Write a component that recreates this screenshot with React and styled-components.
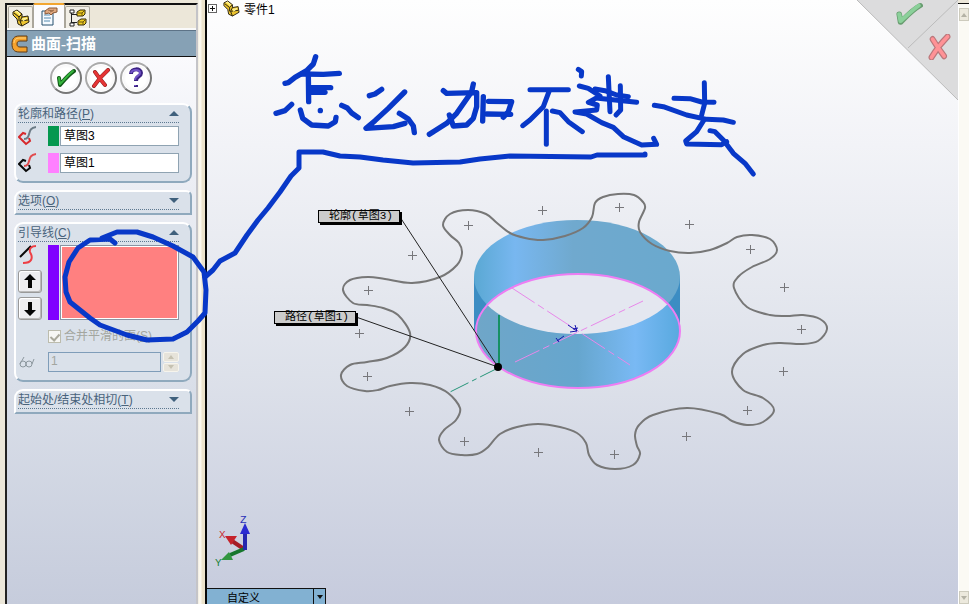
import React from "react";
import styled, { createGlobalStyle } from "styled-components";

const GlobalStyle = createGlobalStyle`
  * { box-sizing: border-box; }
  body { margin: 0; overflow: hidden; }
  body, button, input, textarea {
    font-family: "Liberation Sans", "Noto Sans CJK SC", sans-serif;
    font-size: 12px;
  }
  svg { display: block; }
`;

const Page = styled.div`
  position: relative;
  display: flex;
  min-height: 100vh;
  overflow: hidden;
  background: #ece7d9;
`;

const Dock = styled.aside`
  display: flex;
  width: 207px;
  flex: none;
  padding: 3px 0 0 5px;
  border-right: 2px solid #080808;
  background: linear-gradient(90deg, #ece7d9 0 198px, #fbf8ef 199px 201px, #ece3cc 202px);
`;

const Panel = styled.div`
  display: flex;
  flex-direction: column;
  width: 193px;
  border-top: 2px solid #111;
  border-left: 2px solid #222;
  border-right: 2px solid #c4c4c8;
  background: #ece7d9;
`;

const Tabs = styled.nav`
  display: flex;
  height: 25px;
  padding-left: 1px;
  align-items: flex-end;
  border-bottom: 2px solid #fafafa;
`;

const Tab = styled.button`
  display: grid;
  place-items: center;
  width: ${(p) => (p.$active ? 32 : 25)}px;
  height: ${(p) => (p.$active ? 25 : 22)}px;
  padding: 0;
  border: 1px solid #aaa69b;
  border-top: ${(p) => (p.$active ? "2px solid #f2a630" : "1px solid #aaa69b")};
  border-bottom: 0;
  border-radius: 2px 2px 0 0;
  background: ${(p) => (p.$active ? "#fbfbfd" : "#f2efe7")};
`;

const TitleBar = styled.h1`
  display: flex;
  align-items: center;
  gap: 3px;
  height: 27px;
  margin: 0;
  padding-left: 4px;
  border-top: 1px solid #5d7387;
  border-bottom: 1px solid #111;
  background: #86a1b5;
  color: #fff;
  font: bold 15px/24px "Liberation Serif", "Noto Sans CJK SC", sans-serif;
`;

const PanelBody = styled.div`
  flex: 1;
  padding: 5px 4px 0 7px;
  background: linear-gradient(#fafafd, #eceef4 22%, #dce1ea 55%, #c6ccdc);
`;

const Actions = styled.div`
  display: flex;
  justify-content: center;
  gap: 3px;
  padding-right: 5px;
  margin-bottom: 9px;
`;

const RoundButton = styled.button`
  display: grid;
  place-items: center;
  width: 32px;
  height: 32px;
  padding: 0;
  border: 2px solid #777;
  border-top-color: #aaa;
  border-left-color: #aaa;
  border-radius: 50%;
  background: radial-gradient(#fff 50%, #e4e2e6);
  box-shadow: inset 0 0 0 1px #fff;
`;

const Group = styled.section`
  margin-bottom: 7px;
  padding: 0 11px ${(p) => (p.$open ? 8 : 3)}px 2px;
  border: 2px solid #8fa9bd;
  border-top-color: #fff;
  border-left-color: #fff;
  border-radius: ${(p) => (p.$open ? "9px 9px 9px 9px" : "9px 6px 0 0")};
  background: #dae1ea;
`;

const GroupHeader = styled.button`
  display: flex;
  align-items: center;
  justify-content: space-between;
  width: 100%;
  height: 18px;
  padding: 0;
  border: 0;
  border-bottom: 1px dotted #5c7890;
  background: none;
  color: #49637b;
  line-height: 16px;
  text-align: left;
`;

const Triangle = styled.i`
  width: 0;
  height: 0;
  border: 5px solid transparent;
  border-top-width: ${(p) => (p.$up ? 0 : 5)}px;
  border-bottom-width: ${(p) => (p.$up ? 5 : 0)}px;
  border-top-color: ${(p) => (p.$up ? "transparent" : "#3f607c")};
  border-bottom-color: ${(p) => (p.$up ? "#3f607c" : "transparent")};
`;

const SelectionRow = styled.label`
  display: flex;
  align-items: stretch;
  height: 20px;
  margin-top: ${(p) => p.$top}px;
`;

const RowIcon = styled.span`
  display: grid;
  place-items: center start;
  width: 30px;
  flex: none;
`;

const Swatch = styled.span`
  width: 11px;
  flex: none;
  margin-right: 1px;
  background: ${(p) => p.$color};
`;

const Field = styled.input`
  min-width: 0;
  flex: 1;
  padding: 0 3px 3px;
  border: 1px solid #8fa3b2;
  background: #fff;
  color: #000;
`;

const GuideArea = styled.div`
  display: flex;
  height: 75px;
  margin-top: 3px;
`;

const GuideTools = styled.div`
  display: flex;
  flex-direction: column;
  justify-content: space-between;
  width: 30px;
  flex: none;
`;

const ArrowButton = styled.button`
  display: grid;
  place-items: center;
  width: 24px;
  height: 23px;
  padding: 0;
  border: 1px solid #999;
  border-radius: 3px;
  background: #ededf0;
  box-shadow: inset -1px -1px #bbb, inset 1px 1px #fff;
`;

const GuideList = styled.textarea`
  min-width: 0;
  flex: 1;
  resize: none;
  border: 1px solid #8994a2;
  outline: 1px solid #fff;
  outline-offset: -2px;
  background: #ff8080;
`;

const MergeLabel = styled.label`
  display: flex;
  align-items: center;
  gap: 3px;
  height: 16px;
  margin: 8px 0 0 30px;
  color: #a3a69f;
  line-height: 14px;
  white-space: nowrap;
`;

const Check = styled.input`
  appearance: none;
  display: grid;
  place-items: center;
  width: 13px;
  height: 13px;
  margin: 0;
  border: 1px solid #bcbcad;
  background: #f7f7f4;
  &:checked::after {
    content: "";
    width: 4px;
    height: 7px;
    border: solid #aaa99c;
    border-width: 0 2px 2px 0;
    rotate: 42deg;
  }
`;

const NumberRow = styled.div`
  display: flex;
  height: 20px;
  margin-top: 8px;
`;

const NumberField = styled(Field)`
  padding-left: 2px;
  border-color: #7f9db9;
  background: #dae1ea;
  color: #a3a69f;
`;

const Spinner = styled.div`
  display: flex;
  flex-direction: column;
  gap: 1px;
  width: 16px;
  margin-left: 2px;
`;

const SpinButton = styled.button`
  display: grid;
  place-items: center;
  flex: 1;
  padding: 0;
  border: 1px solid #f6f4ec;
  border-radius: 2px;
  background: #e6e3da;
`;

const Viewport = styled.main`
  position: relative;
  display: flex;
  flex-direction: column;
  justify-content: space-between;
  min-width: 0;
  flex: 1;
  overflow: hidden;
  background: linear-gradient(#fefefe, #f2f3f7 24%, #dde1ea 62%, #c6cbdd);
`;

const Tree = styled.div`
  display: flex;
  align-items: center;
  gap: 4px;
  height: 16px;
  padding-left: 1px;
  color: #000;
`;

const Expander = styled.button`
  display: grid;
  place-items: center;
  width: 9px;
  height: 9px;
  margin-right: 2px;
  padding: 0;
  border: 1px solid #666;
  background: #fff;
`;

const Scene = styled.svg`
  position: absolute;
  top: 0;
  left: 0;
`;

const Callout = styled.span`
  position: absolute;
  left: ${(p) => p.$x}px;
  top: ${(p) => p.$y}px;
  width: 82px;
  height: 13px;
  padding-left: 4px;
  border: 1px solid #000;
  background: #ccc;
  box-shadow: 2px 2px #000;
  color: #000;
  font: 11px/11px "Liberation Mono", "Noto Sans CJK SC", monospace;
  text-align: center;
  white-space: nowrap;
`;

const Corner = styled.div`
  position: absolute;
  top: 0;
  right: 0;
  width: 101px;
  height: 100px;
`;

const CornerShape = styled.svg`
  position: absolute;
  inset: 0;
`;

const CornerButton = styled.button`
  position: absolute;
  top: ${(p) => p.$top}px;
  right: ${(p) => p.$right}px;
  padding: 0;
  border: 0;
  background: none;
`;

const ViewSelector = styled.div`
  display: flex;
  position: relative;
  width: 119px;
  height: 16px;
  border: 1px solid #111;
  border-left: 0;
  border-bottom: 0;
  background: #82b1d2;
`;

const ViewName = styled.button`
  flex: 1;
  padding: 3px 0 0 20px;
  border: 0;
  background: none;
  color: #000;
  font-size: 11px;
  line-height: 12px;
  text-align: left;
`;

const ViewMenu = styled.button`
  display: grid;
  place-items: center;
  width: 12px;
  padding: 0;
  border: 0;
  border-left: 1px solid #111;
  background: none;
`;

const ScrollStrip = styled.div`
  display: flex;
  flex-direction: column;
  justify-content: space-between;
  width: 11px;
  flex: none;
  padding-top: 5px;
  border-top: 3px solid #ece7d9;
  box-shadow: inset 0 1px #111, inset 1px 0 #fff;
  background: #fbfaf4;
`;

const ScrollButton = styled.button`
  display: grid;
  place-items: center;
  width: 10px;
  height: 13px;
  margin-left: 1px;
  padding: 0;
  border: 1px solid #cdcbbd;
  background: #ece9dd;
`;

const Ink = styled.svg`
  position: absolute;
  top: 0;
  left: 0;
  pointer-events: none;
`;

/* Smooth closed curve through a list of points. */
function smoothLoop(pts) {
  const n = pts.length;
  const at = (i) => pts[(i + n) % n];
  let d = `M${pts[0]}`;
  for (let i = 0; i < n; i++) {
    const [a, b, c, e] = [at(i - 1), at(i), at(i + 1), at(i + 2)];
    d += `C${b[0] + (c[0] - a[0]) / 6},${b[1] + (c[1] - a[1]) / 6} ${c[0] - (e[0] - b[0]) / 6},${c[1] - (e[1] - b[1]) / 6} ${c}`;
  }
  return d + "Z";
}

const gearProfile = [
  [443, 225], [450, 214], [468, 210], [486, 214], [497, 223], [510, 233], [525, 238], [543, 240], [565, 236], [583, 228], [592, 217],
  [595, 203], [603, 197], [618, 194], [634, 195], [643, 202], [645, 208], [639, 222], [640, 232], [652, 244], [670, 251],
  [690, 253], [710, 250], [727, 243], [737, 237], [752, 235], [770, 239], [777, 250], [770, 259], [752, 267],
  [738, 277], [734, 288], [747, 307], [770, 315], [787, 316], [803, 315], [820, 319], [827, 329], [818, 341],
  [802, 344], [780, 343], [763, 345], [743, 354], [732, 372], [743, 390], [763, 398], [774, 410], [763, 422],
  [747, 425], [732, 421], [720, 414], [687, 408], [653, 415], [639, 425], [635, 435], [637, 446], [640, 454], [633, 465],
  [615, 469], [597, 465], [589, 455], [586, 443], [577, 433], [560, 427], [538, 424], [517, 427], [500, 434],
  [487, 448], [477, 454], [462, 455], [447, 452], [439, 440], [444, 430], [456, 420], [460, 408], [448, 393], [430, 385],
  [410, 383], [390, 386], [378, 390], [365, 391], [347, 386], [341, 375], [350, 365], [367, 362], [387, 358], [405, 347],
  [410, 333], [398, 315], [383, 308], [367, 305], [353, 303], [343, 290], [350, 280], [368, 277], [385, 279],
  [412, 283], [440, 277], [457, 265], [462, 253], [459, 243], [450, 235],
];

const marks = [
  [468, 225], [412, 255], [368, 290], [359, 333], [367, 376], [409, 411], [464, 441], [538, 452], [614, 454],
  [686, 436], [747, 410], [783, 371], [801, 329], [784, 287], [750, 249], [689, 224], [619, 207], [542, 210],
];

/* Pen strokes of the handwritten note, drawn at three units per pixel. */
const leftStrokes = [
  "167,50 160,72 140,92 105,112 85,128 75,130",
  "125,102 190,103 238,100",
  "145,100 146,185",
  "150,143 212,143",
  "150,157 195,157",
  "95,193 75,212 48,220",
  "121,210 128,235 155,255 205,258 226,245 228,232",
  "181,211 181,212",
  "245,196 262,204 275,219 295,233",
  "328,167 345,162 365,148",
  "434,156 385,205 345,242 318,265 400,260 435,250",
  "418,220 445,237 460,258 463,278",
  "550,152 560,160 650,158 650,200 640,235 620,255 580,258 568,225",
  "640,132 635,155 590,220 560,250 520,275 508,283",
  "670,170 668,243",
  "685,184 755,185 745,215 730,232",
  "680,222 752,223",
];

const rightStrokes = [
  "60,149 175,149",
  "118,152 100,200 60,240 38,257",
  "109,213 109,313",
  "127,213 150,218 175,245 217,275",
  "205,88 215,95 214,108",
  "208,138 235,145 270,168 235,187 262,195 260,210 195,216 230,222 275,248 310,262 340,290 395,315 440,313 431,295",
  "255,147 285,152 320,165 355,170",
  "265,175 380,187",
  "295,110 300,215",
  "331,137 332,210 318,225",
  "492,175 540,176 575,186 612,187",
  "583,128 584,190 575,225",
  "433,196 460,200 530,225 590,238 640,240 670,247",
  "582,240 560,275 527,303 530,312 635,314 650,305",
  "600,272 615,275 640,300 670,340 705,370 730,402",
];

const pageStrokes = [
  "645,154 645,155 597,155 591,157 510,156 500,157 480,159 460,162 413,163 383,160 360,157 340,156 323,152 299,152 299,168 291,176 280,192 268,208 258,220 247,235 235,253 220,261 213,270 205,277",
  "115,243 110,239 90,240 78,248 69,262 65,277 66,292 70,302 80,310 90,318 100,325 127,335 147,340 173,339 187,332 198,321 205,313 206,290 204,272 193,257 173,246 153,237 137,232 117,232 102,238",
];

function PartIcon({ size = 18 }) {
  return (
    <svg width={size} height={size} viewBox="0 0 18 18" aria-hidden="true">
      <path d="M1 3 5 1l5 4 0 3 6-1 1 6-7 4-4-2-1-5-4-4Z" fill="#edc52f" stroke="#282110" />
      <path d="m2 4 5 4 0 4m0-4 3-3m0 3-2 4 8-1m-8 1 2 5" fill="none" stroke="#252010" />
      <path d="m3 3 2-1 3 3-1 1M10 10l5-1-4 3" stroke="#fff5a8" fill="#ffec65" />
    </svg>
  );
}

function PropertiesIcon() {
  return (
    <svg width="18" height="19" viewBox="0 0 18 19" aria-hidden="true">
      <path d="M2 4h11v14H2z" fill="#f5faff" stroke="#25516e" />
      <path d="M4 8h6m-6 3h7m-7 3h6" stroke="#558bb0" />
      <path d="m5 4 4-3h8v4l-4 1-2 2-2-2-4 1Z" fill="#dfa87f" stroke="#8b5a38" />
      <path d="m8 3 5 1m-3 1 4-2" stroke="#9a6a48" />
    </svg>
  );
}

function ConfigIcon() {
  return (
    <svg width="18" height="19" viewBox="0 0 18 19" aria-hidden="true">
      <path d="M2.5 4v13M3 6.500h5M3 14.500h5" fill="none" stroke="#222" />
      <path d="M1 2h4v3H1zM1 15h4v3H1z" fill="#fff" stroke="#222" />
      <path d="m8 4 3-2h5v4l-2 2H8Zm1 9 3-2h5v4l-2 2H9Z" fill="#f2cf24" stroke="#332b0c" />
      <path d="M9 5h4v3m0-3 2-2M10 14h4v3m0-3 2-2" fill="none" stroke="#6b540b" />
    </svg>
  );
}

function SweepIcon() {
  return (
    <svg width="17" height="18" viewBox="0 0 17 18" aria-hidden="true">
      <path d="M16 1H8C3 1 1 4 1 9s2 8 7 8h8v-5H9c-2 0-3-1-3-3s1-3 3-3h7Z" fill="#f5a22d" stroke="#5d3b17" />
      <path d="M15 3H8C5 3 3 5 3 8" fill="none" stroke="#ffd278" />
    </svg>
  );
}

function CheckIcon({ pale }) {
  return (
    <svg width={pale ? 28 : 20} height={pale ? 24 : 20} viewBox="0 0 20 20" preserveAspectRatio="none" aria-hidden="true">
      <path d="m3 10 1 7C9 11 12 7 18 3" fill="none" stroke={pale ? "#689d70" : "#125a19"} strokeWidth="4" strokeLinecap="round" strokeLinejoin="round" />
      <path d="m3 10 1 6C9 11 12 7 17 3" fill="none" stroke={pale ? "#8bd09a" : "#37b73d"} strokeWidth={pale ? 3 : 2} strokeLinecap="round" strokeLinejoin="round" />
    </svg>
  );
}

function CrossIcon({ pale }) {
  return (
    <svg width={pale ? 23 : 20} height={pale ? 26 : 20} viewBox="0 0 20 20" preserveAspectRatio="none" aria-hidden="true">
      <path d="M4 4q4 6 10 13M17 2Q9 9 3 18" fill="none" stroke={pale ? "#ba777b" : "#811b1a"} strokeWidth={pale ? 5 : 4} strokeLinecap="round" />
      <path d="M4 4q4 6 10 13M17 2Q9 9 3 18" fill="none" stroke={pale ? "#ff9296" : "#e53535"} strokeWidth="3" strokeLinecap="round" />
    </svg>
  );
}

function HelpIcon() {
  return (
    <svg width="16" height="22" viewBox="0 0 16 22" aria-hidden="true">
      <path d="M3 7c0-6 10-6 10-1 0 4-5 3-5 8m0 4v2" fill="none" stroke="#3c2384" strokeWidth="4" />
      <path d="M3 6c1-4 9-4 9 0 0 3-5 3-5 7m0 5v1" fill="none" stroke="#7354c7" strokeWidth="2" />
    </svg>
  );
}

function SketchIcon({ profile }) {
  return (
    <svg width="20" height="20" viewBox="0 0 20 20" fill="none" aria-hidden="true">
      <path d="m8 8-3-1-4 4 7 7 4-3-1-3" stroke={profile ? "#d7282b" : "#090909"} strokeWidth="2" />
      <path d="M6 13c8 0 2-11 12-12" stroke={profile ? "#6b7a85" : "#e14b4d"} strokeWidth="2" />
    </svg>
  );
}

function GuideIcon() {
  return (
    <svg width="20" height="20" viewBox="0 0 20 20" fill="none" aria-hidden="true">
      <path d="M2 12 13 1" stroke="#080808" strokeWidth="2" />
      <path d="M18 1c-4 0-7 2-6 6 1 3 3 4 1 8-1 2-4 3-8 3" stroke="#ee3e44" strokeWidth="2" />
    </svg>
  );
}

function ArrowIcon({ down }) {
  return (
    <svg width="12" height="16" viewBox="0 0 12 16" aria-hidden="true">
      <path d={down ? "M4 1h4v8h4l-6 6-6-6h4Z" : "M4 15h4V7h4L6 1 0 7h4Z"} fill="#050505" />
    </svg>
  );
}

function Caret({ up, color = "#111", width = 6 }) {
  return (
    <svg width={width} height="4" viewBox="0 0 6 4" aria-hidden="true">
      <path d={up ? "M0 4 3 0l3 4Z" : "M0 0h6L3 4Z"} fill={color} />
    </svg>
  );
}

function Header({ text, hotkey, open }) {
  return (
    <GroupHeader aria-expanded={!!open}>
      <span>{text}(<u>{hotkey}</u>)</span>
      <Triangle $up={open} />
    </GroupHeader>
  );
}

function Model() {
  return (
    <Scene width="752" height="604" viewBox="207 0 752 604" role="img" aria-label="曲面">
      <defs>
        <linearGradient id="back"><stop stopColor="#5aa8d3" /><stop offset=".2" stopColor="#78b7f0" /><stop offset=".48" stopColor="#70a9ce" /><stop offset="1" stopColor="#6aa9ce" /></linearGradient>
        <linearGradient id="front"><stop stopColor="#6fa6c8" /><stop offset=".5" stopColor="#66a6ce" /><stop offset=".78" stopColor="#79b9f4" /><stop offset="1" stopColor="#58a9df" /></linearGradient>
        <clipPath id="rim"><ellipse cx="577" cy="277" rx="103" ry="57" /></clipPath>
      </defs>
      <path d="M474 277v54h206v-54Z" fill="#3c8dc3" />
      <ellipse cx="577" cy="277" rx="103" ry="57" fill="url(#back)" />
      <ellipse cx="578" cy="331" rx="102" ry="57" fill="url(#front)" />
      <ellipse cx="578" cy="331" rx="102" ry="57" fill="#e4e7f0" clipPath="url(#rim)" />
      <ellipse cx="578" cy="331" rx="102" ry="57" fill="none" stroke="#ee7df3" strokeWidth="2" />
      <path d={smoothLoop(gearProfile)} fill="none" stroke="#777" strokeWidth="2" />
      {marks.map(([x, y]) => (
        <path key={`${x}-${y}`} d={`M${x - 4} ${y + 0.5}h9M${x + 0.5} ${y - 4}v9`} stroke="#77777b" />
      ))}
      <path d="M512 288 630 365M515 362l128-61" fill="none" stroke="#e888ea" strokeDasharray="27 4 7 4" />
      <path d="M499 315v53" stroke="#169063" strokeWidth="2" />
      <path d="m498 368-50 25" stroke="#269579" strokeDasharray="20 4 5 4" />
      <path d="M400 217 498 367M356 317l142 50" stroke="#222" />
      <circle cx="498" cy="367" r="4" />
      <path d="m568 325 9 6-2-6m2 6-7 1m-6 4-7 5m-1-3 3 4m14-13 5-1" stroke="#1515ad" strokeWidth="1" fill="none" />
      <g strokeWidth="4">
        <path d="m244 549-12-8" stroke="#a51c26" /><path d="m225 536 12 0-6 9Z" fill="#c5232b" />
        <path d="m244 549-14 6" stroke="#16762c" /><path d="m221 560 8-8 4 8Z" fill="#329640" />
        <path d="M245 550v-18" stroke="#2527ae" /><path d="m245 523-5 11h10Z" fill="#2a2bd1" />
      </g>
      <g fontFamily="Liberation Mono, monospace" fontSize="11">
        <text x="240" y="523" fill="#2b31b8">Z</text><text x="219" y="538" fill="#c83036">X</text><text x="215" y="566" fill="#21823b">Y</text>
      </g>
    </Scene>
  );
}

function HandwrittenNote() {
  return (
    <Ink width="969" height="604" viewBox="0 0 969 604" fill="none" stroke="#0838c8" strokeLinecap="round" strokeLinejoin="round" role="img" aria-label="怎么加不进去">
      <g strokeWidth="5">{pageStrokes.map((s) => <polyline key={s} points={s} />)}</g>
      <g transform="translate(260 40) scale(.33333)" strokeWidth="16">{leftStrokes.map((s) => <polyline key={s} points={s} />)}</g>
      <g transform="translate(510 40) scale(.33333)" strokeWidth="15">{rightStrokes.map((s) => <polyline key={s} points={s} />)}</g>
    </Ink>
  );
}

export default function App() {
  return (
    <Page>
      <GlobalStyle />
      <Dock>
        <Panel>
          <Tabs>
            <Tab aria-label="特征"><PartIcon /></Tab>
            <Tab $active aria-label="属性"><PropertiesIcon /></Tab>
            <Tab aria-label="配置"><ConfigIcon /></Tab>
          </Tabs>
          <TitleBar><SweepIcon />曲面-扫描</TitleBar>
          <PanelBody>
            <Actions>
              <RoundButton aria-label="确定"><CheckIcon /></RoundButton>
              <RoundButton aria-label="取消"><CrossIcon /></RoundButton>
              <RoundButton aria-label="帮助"><HelpIcon /></RoundButton>
            </Actions>
            <Group $open>
              <Header text="轮廓和路径" hotkey="P" open />
              <SelectionRow $top={3}>
                <RowIcon><SketchIcon profile /></RowIcon>
                <Swatch $color="#05984f" />
                <Field aria-label="轮廓" defaultValue="草图3" />
              </SelectionRow>
              <SelectionRow $top={7}>
                <RowIcon><SketchIcon /></RowIcon>
                <Swatch $color="#ff80ff" />
                <Field aria-label="路径" defaultValue="草图1" />
              </SelectionRow>
            </Group>
            <Group><Header text="选项" hotkey="O" /></Group>
            <Group $open>
              <Header text="引导线" hotkey="C" open />
              <GuideArea>
                <GuideTools>
                  <GuideIcon />
                  <ArrowButton aria-label="上移"><ArrowIcon /></ArrowButton>
                  <ArrowButton aria-label="下移"><ArrowIcon down /></ArrowButton>
                </GuideTools>
                <Swatch $color="#8000ff" />
                <GuideList aria-label="引导线" readOnly />
              </GuideArea>
              <MergeLabel>
                <Check type="checkbox" defaultChecked disabled />
                <span>合并平滑的面(<u>S</u>)</span>
              </MergeLabel>
              <NumberRow>
                <RowIcon>
                  <svg width="17" height="14" viewBox="0 0 17 14" fill="none" stroke="#8d989f" aria-hidden="true">
                    <circle cx="5" cy="9" r="3" /><circle cx="11" cy="9" r="3" /><path d="M2 9 6 2m8 7 2-5" />
                  </svg>
                </RowIcon>
                <NumberField aria-label="截面" defaultValue="1" disabled />
                <Spinner>
                  <SpinButton aria-label="增加" disabled><Caret up color="#c5c1b1" /></SpinButton>
                  <SpinButton aria-label="减少" disabled><Caret color="#c5c1b1" /></SpinButton>
                </Spinner>
              </NumberRow>
            </Group>
            <Group><Header text="起始处/结束处相切" hotkey="T" /></Group>
          </PanelBody>
        </Panel>
      </Dock>
      <Viewport>
        <Model />
        <Tree>
          <Expander aria-label="展开">
            <svg width="7" height="7" viewBox="0 0 7 7" stroke="#111" aria-hidden="true"><path d="M1 3.5h5M3.5 1v5" /></svg>
          </Expander>
          <PartIcon size={17} />
          <span>零件1</span>
        </Tree>
        <Callout $x={111} $y={210}>轮廓(草图3)</Callout>
        <Callout $x={67} $y={311}>路径(草图1)</Callout>
        <Corner>
          <CornerShape width="101" height="100" viewBox="0 0 101 100" aria-hidden="true">
            <path d="M0 0h101v100Z" fill="#dcdcdd" /><path d="m0 0 101 100M51 48l50-48" stroke="#bbb" />
          </CornerShape>
          <CornerButton $top={2} $right={35} aria-label="确定"><CheckIcon pale /></CornerButton>
          <CornerButton $top={34} $right={7} aria-label="取消"><CrossIcon pale /></CornerButton>
        </Corner>
        <ViewSelector>
          <ViewName>自定义</ViewName>
          <ViewMenu aria-label="选择视图"><Caret /></ViewMenu>
        </ViewSelector>
      </Viewport>
      <ScrollStrip>
        <ScrollButton aria-label="向上滚动"><Caret up color="#b4b2a5" /></ScrollButton>
        <ScrollButton aria-label="向下滚动"><Caret color="#b4b2a5" /></ScrollButton>
      </ScrollStrip>
      <HandwrittenNote />
    </Page>
  );
}
